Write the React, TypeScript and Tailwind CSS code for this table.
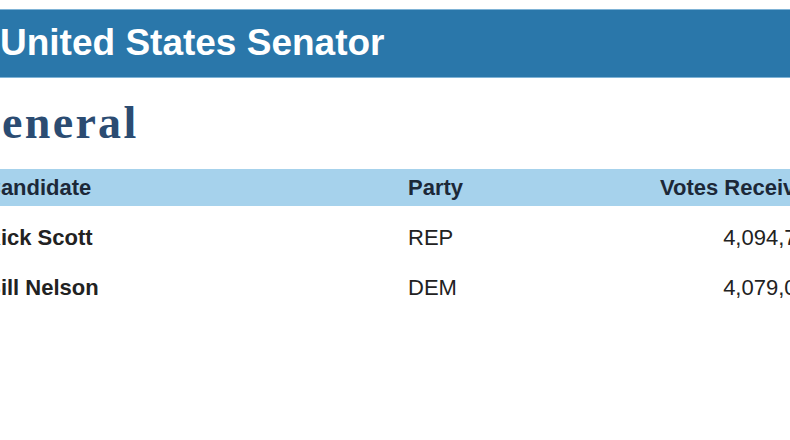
import React from 'react';

interface Result {
  name: string;
  party: string;
  votes: string;
}

const results: Result[] = [
  { name: 'Rick Scott', party: 'REP', votes: '4,094,745' },
  { name: 'Bill Nelson', party: 'DEM', votes: '4,079,043' },
];

export default function App() {
  return (
    <div className="w-[790px] h-[440px] overflow-hidden bg-white">
      {/* page is cropped on both sides, so the content box runs past the window */}
      <div className="-ml-[16px] w-[840px] pt-[9px]" style={{ fontFamily: '"Liberation Sans", Arial, sans-serif' }}>
        <div className="h-[69px] bg-[#2a77aa] border-y border-[#7fb3d6] flex items-center pl-[16px] pb-[3px]">
          <h1 className="text-[37px] leading-[37px] font-bold text-white">United States Senator</h1>
        </div>

        <h2
          className="mt-[22px] -ml-[20px] text-[46px] leading-[46px] font-bold text-[#2b4c72] tracking-[2.3px]"
          style={{ fontFamily: 'Georgia, "Liberation Serif", serif' }}
        >
          General
        </h2>

        <div className="mt-[23px] pr-[3px]">
          <div className="grid grid-cols-[424px_200px_1fr] h-[37px] items-center bg-[#a6d2ec] text-[22px] leading-[22px] font-bold text-[#1c2838]">
            <div className="pl-[1px]">Candidate</div>
            <div>Party</div>
            <div className="text-right">Votes Received</div>
          </div>
          <div className="mt-[7px]">
            {results.map((r) => (
              <div key={r.name} className="grid grid-cols-[424px_200px_1fr] h-[50px] items-center text-[22px] leading-[22px] text-[#222]">
                <div className="pl-[1px] font-bold">{r.name}</div>
                <div>{r.party}</div>
                <div className="text-right">{r.votes}</div>
              </div>
            ))}
          </div>
        </div>
      </div>
    </div>
  );
}
